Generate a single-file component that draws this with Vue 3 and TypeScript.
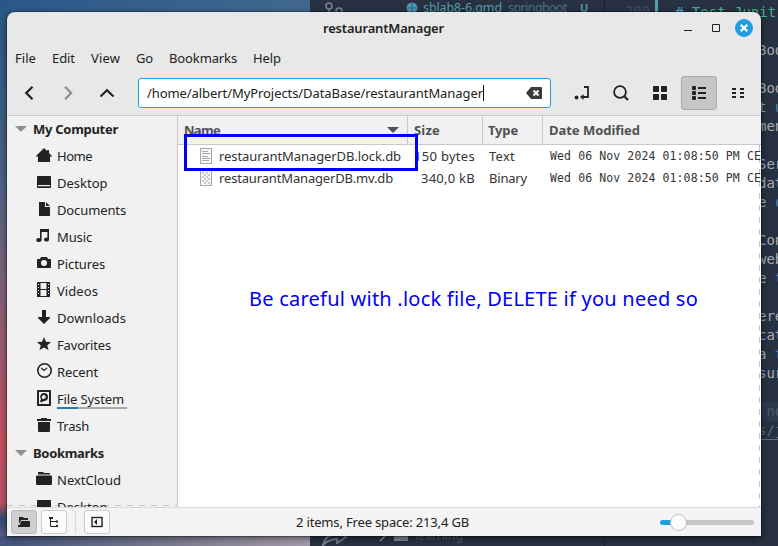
<script setup lang="ts">
import type { Directive } from 'vue'

interface Place { label: string; width: number; icon: string; used?: boolean }

// Adjusts tracking so a label occupies its intended width.
const vFit: Directive<HTMLElement, number> = {
  mounted(el, { value }) {
    const count = (el.textContent ?? '').length
    const natural = el.getBoundingClientRect().width
    if (count > 1) el.style.letterSpacing = `${(value - natural) / count}px`
  },
}

const menus = [
  { label: 'File', width: 21 }, { label: 'Edit', width: 23 }, { label: 'View', width: 29 },
  { label: 'Go', width: 17 }, { label: 'Bookmarks', width: 68 }, { label: 'Help', width: 28 },
]

const folder = 'M2 1h5l1 1h6v1.500H2zM1 4.500h14q1 0 1 1V13q0 1-1 1H1q-1 0-1-1V5.500q0-1 1-1z'
const desktop = 'M2 2h12q1 0 1 1v10q0 1-1 1H2q-1 0-1-1V3q0-1 1-1zM2 11v1.2h12V11z'
const computer: Place[] = [
  { label: 'Home', width: 35, icon: 'M8 1l3 3V3h2v3l3 3v.6h-2V15H2V9.600H0V9z' },
  { label: 'Desktop', width: 50.5, icon: desktop },
  { label: 'Documents', width: 69, icon: 'M3 1h6v5h5v9H3zM10 1l4 4h-4z' },
  { label: 'Music', width: 35, icon: 'M4 1h9v10.500a2.500 2 0 1 1-1.600-1.800V4H5.600v8a2.700 2 0 1 1-1.600-1.800z' },
  { label: 'Pictures', width: 48, icon: 'M5 2h6l1 2h2q1 0 1 1v7q0 1-1 1H2q-1 0-1-1V5q0-1 1-1h2zM8 5a3 3 0 1 0 0 6 3 3 0 0 0 0-6z' },
  { label: 'Videos', width: 41, icon: 'M1 0h13v15H1zM4.500 1v6h6V1zM4.500 8v6h6V8zM2 2v1h1V2zM2 5v1h1V5zM2 8v1h1V8zM2 11v1h1v-1zM12 2v1h1V2zM12 5v1h1V5zM12 8v1h1V8zM12 11v1h1v-1z' },
  { label: 'Downloads', width: 69, icon: 'M6 1h4v7h4v1l-6 6-6-6V8h4z' },
  { label: 'Favorites', width: 54, icon: 'M8 1l2 4.700 5 .3-3.800 3.400L12.500 14 8 11.500 3.500 14l1.300-4.600L1 6l5-.3z' },
  { label: 'Recent', width: 41, icon: 'M8.500 0a7.500 7.500 0 1 0 0 15 7.500 7.500 0 0 0 0-15zM8.500 1.600a5.900 5.900 0 1 1 0 11.800 5.900 5.900 0 0 1 0-11.800zM5.600 4.500l2.400 2 3-2 .6.8L8 8.200 4.900 5.500z' },
  { label: 'File System', width: 67, used: true, icon: 'M2 0h12q1 0 1 1v14q0 1-1 1H2q-1 0-1-1V1q0-1 1-1zM3 2v12h10V2zM8 3a4 4 0 1 1 0 8L5 12.500 4 11l1-1.500A4 4 0 0 1 8 3zM8 5a2.200 2.200 0 0 0-1 4.200l2-1v.6A2.200 2.200 0 0 0 8 5z' },
  { label: 'Trash', width: 32, icon: 'M5 1h6v1h4v2H1V2h4zM2 5h12v9q0 1-1 1H3q-1 0-1-1z' },
]
const bookmarks: Place[] = [
  { label: 'NextCloud', width: 64, icon: folder },
  { label: 'Desktop', width: 50.5, icon: desktop },
]
const sections = [
  { title: 'My Computer', width: 85, places: computer },
  { title: 'Bookmarks', width: 71, places: bookmarks },
]

const files = [
  { name: 'restaurantManagerDB.lock.db', nw: 182, size: '150 bytes', sw: 61, type: 'Text', tw: 26, text: true },
  { name: 'restaurantManagerDB.mv.db', nw: 174, size: '340,0 kB', sw: 54, type: 'Binary', tw: 38, text: false },
]
const modified = 'Wed 06 Nov 2024 01:08:50 PM CET'

const code = [
  { t: '# Test Junit', c: 'green' }, { t: '' }, { t: 'Boot' }, { t: '' }, { t: 'Boot' },
  { t: 't u', c: 'mix' }, { t: 'ment' }, { t: '' }, { t: 'Ser' }, { t: 'data' }, { t: 'e c', c: 'mix' },
  { t: '' }, { t: 'Cont' }, { t: 'web' }, { t: 'e t', c: 'mix' }, { t: '' }, { t: 'erea' },
  { t: 'cati' }, { t: 'a t', c: 'mix' }, { t: 'sur' }, { t: '' }, { t: ' no', c: 'dim' }, { t: 's/j', c: 'link' },
]
</script>

<template>
  <main class="desktop">
    <div class="wallpaper"></div>
    <div class="editor">
      <div class="explorer">
        <div class="tab">
          <svg class="branch" width="22" height="20" viewBox="0 0 22 20"><g fill="none" stroke="#7b8390" stroke-width="1.600"><circle cx="6" cy="7" r="3" /><circle cx="16" cy="12" r="3" /><path d="M6 10v9" /></g></svg>
          <svg class="globe" width="12" height="12" viewBox="0 0 12 12"><circle cx="6" cy="6" r="5.500" fill="#519aba" /><path d="M6 0v12M0 6h12" stroke="#29617b" /></svg>
          <span v-fit="79" class="filename">sblab8-6.qmd</span><span v-fit="59" class="package">springboot</span><b>U</b>
        </div>
        <div class="tree">
          <svg width="26" height="20" viewBox="0 0 26 20"><path d="M1 19C3 11 9 8 15 8V4l9 7-9 6v-4c-6 0-10 2-14 6z" fill="none" stroke="#737c89" stroke-width="1.800" /></svg>
          <svg class="chevron" width="8" height="10" viewBox="0 0 8 10"><path d="M1 0l5 5-5 5" fill="none" stroke="#9ba3ad" stroke-width="1.300" /></svg>
          <i></i><span v-fit="48">learning</span>
        </div>
      </div>
      <div class="gutter">200</div>
      <div class="code">
        <p v-for="(line, i) in code" :key="i" :class="line.c"><span v-if="i === 0"><em>#</em> Test Junit</span><span v-else class="tail"><template v-if="line.c === 'mix'">{{ line.t.slice(0, 2) }}<em>{{ line.t.slice(2) }}</em></template><template v-else>{{ line.t }}</template></span></p>
      </div>
    </div>

    <section class="window">
      <header class="titlebar">
        <h1 v-fit="121">restaurantManager</h1>
        <div class="controls">
          <svg width="10" height="20" viewBox="0 0 10 20"><path d="M1 12.500h8" stroke="#222" /></svg>
          <svg width="10" height="20" viewBox="0 0 10 20"><path d="M1.500 6.500h7v7h-7z" fill="none" stroke="#222" /></svg>
          <svg width="18" height="18" viewBox="0 0 18 18"><circle cx="9" cy="9" r="9" fill="#1f9ede" /><path d="M5.700 5.700l6.600 6.600m0-6.600l-6.600 6.600" stroke="#fff" stroke-width="2.200" /></svg>
        </div>
      </header>
      <nav class="menubar"><span v-for="m in menus" :key="m.label" v-fit="m.width">{{ m.label }}</span></nav>
      <div class="toolbar">
        <div class="history">
          <svg width="16" height="16" viewBox="0 0 16 16"><path d="M11.500 1.800L5.300 8l6.200 6.200" /></svg>
          <svg class="off" width="16" height="16" viewBox="0 0 16 16"><path d="M5 1.800L11.200 8 5 14.200" /></svg>
          <svg width="16" height="16" viewBox="0 0 16 16"><path d="M1.500 11.500L8 5.200l6.500 6.300" /></svg>
        </div>
        <div class="entry">
          <span v-fit="336">/home/albert/MyProjects/DataBase/restaurantManager</span><i class="caret"></i>
          <svg width="16" height="12" viewBox="0 0 16 12"><path d="M0 6l5-6h10q1 0 1 1v10q0 1-1 1H5z" fill="#3a3a3a" /><path d="M7.500 3.500l5 5m0-5l-5 5" stroke="#fff" stroke-width="2" /></svg>
        </div>
        <svg class="jump" width="16" height="16" viewBox="0 0 16 16"><path d="M10 2h4v10H8" fill="none" stroke="#222" stroke-width="1.800" /><path d="M9.500 9v6L6 12z" fill="#222" /><circle cx="2.500" cy="12.500" r="1.900" fill="#222" /></svg>
        <svg class="search" width="16" height="16" viewBox="0 0 16 16" fill="none" stroke="#222"><circle cx="7" cy="7" r="5.900" stroke-width="1.800" /><path d="M11 11l4 4" stroke-width="2.200" /></svg>
        <div class="views">
          <span><svg width="16" height="16" viewBox="0 0 16 16" fill="#222"><rect x="1" y="1" width="6" height="6" rx=".7" /><rect x="9" y="1" width="6" height="6" rx=".7" /><rect x="1" y="9" width="6" height="6" rx=".7" /><rect x="9" y="9" width="6" height="6" rx=".7" /></svg></span>
          <span class="active"><svg width="16" height="16" viewBox="0 0 16 16" fill="#222"><path d="M7 2h8v2H7zM7 7h8v2H7zM7 12h8v2H7z" /><rect x="1" y="1" width="4" height="4" rx="1" /><rect x="1" y="6" width="4" height="4" rx="1" /><rect x="1" y="11" width="4" height="4" rx="1" /></svg></span>
          <span><svg width="16" height="16" viewBox="0 0 16 16" fill="#222"><path d="M2 3h4v2H2zM2 7h4v2H2zM2 11h4v2H2zM10 3h4v2h-4zM10 7h4v2h-4zM10 11h4v2h-4z" /></svg></span>
        </div>
      </div>
      <div class="content">
        <aside class="sidebar">
          <template v-for="s in sections" :key="s.title">
            <h2><i></i><span v-fit="s.width">{{ s.title }}</span></h2>
            <div v-for="p in s.places" :key="p.label" class="place" :class="{ used: p.used }">
              <svg width="16" height="16" viewBox="0 0 16 16"><path fill-rule="evenodd" :d="p.icon" /></svg>
              <span v-fit="p.width">{{ p.label }}</span>
            </div>
          </template>
        </aside>
        <div class="files">
          <div class="row head">
            <div><span v-fit="36">Name</span><i></i></div><div><span v-fit="26">Size</span></div><div><span v-fit="30">Type</span></div><div><span v-fit="91">Date Modified</span></div>
          </div>
          <div v-for="f in files" :key="f.name" class="row">
            <div>
              <svg width="12" height="16" viewBox="0 0 12 16"><rect x=".5" y=".5" width="11" height="15" fill="#f7f7f7" stroke="#aaa" />
                <path v-if="f.text" d="M2 3.500h6M2 5.500h8M2 8.500h6M2 10.500h8M2 12.500h7" stroke="#aaa" />
                <path v-else d="M2 2h2v2H2zm4 0h2v2H6zM4 4h2v2H4zm4 0h2v2H8zM2 6h2v2H2zm4 0h2v2H6zM4 8h2v2H4zm4 0h2v2H8zM2 10h2v2H2zm4 0h2v2H6zM4 12h2v2H4zm4 0h2v2H8z" fill="#ccc" />
              </svg>
              <span v-fit="f.nw">{{ f.name }}</span>
            </div>
            <div class="size"><span v-fit="f.sw">{{ f.size }}</span></div>
            <div><span v-fit="f.tw">{{ f.type }}</span></div>
            <div class="date"><span v-fit="218">{{ modified }}</span></div>
          </div>
        </div>
      </div>
      <footer class="status">
        <div class="toggles">
          <span class="active"><svg width="12" height="12" viewBox="0 0 12 12"><path d="M1 1h4l1 1h4v2H3L1 8zM3 5h9v5q0 1-1 1H0V9h2z" fill="#222" /></svg></span>
          <span><svg width="12" height="12" viewBox="0 0 12 12"><path d="M2.500 1v9.500h6M2.500 5.500h6" fill="none" stroke="#222" /><path d="M1 1h4v2H1zM8 4.500h2v2H8zM8 9h2v2H8z" fill="#222" /></svg></span>
          <i></i>
          <span><svg width="12" height="12" viewBox="0 0 12 12"><rect x="1" y="1.500" width="10" height="9" fill="none" stroke="#222" stroke-width="1.400" /><path d="M6 3v6L3 6z" fill="#222" /></svg></span>
        </div>
        <span v-fit="173" class="summary">2 items, Free space: 213,4 GB</span>
        <div class="slider"><i></i></div>
      </footer>
    </section>
    <div class="highlight"></div>
    <p class="note"><span v-fit="449">Be careful with .lock file, DELETE if you need so</span></p>
  </main>
</template>

<style>
body { overflow: hidden; }
</style>

<style scoped>
* { box-sizing: border-box; }
h1, h2, p { margin: 0; }
svg { display: block; flex: none; }
span, h1 { white-space: pre; }
.desktop { position: relative; display: flex; width: 778px; height: 546px; overflow: hidden; background: #273142; font: 13px/20px "Noto Sans", sans-serif; color: #222; }
.wallpaper { width: 310px; background: linear-gradient(90deg, transparent 0 8px, #2c5889 9px, #42688f 100%) top / 100% 13px no-repeat, linear-gradient(90deg, #41547b, #858194 65%, #a39bab) bottom / 100% 10px no-repeat, linear-gradient(#285783 0, #4d6285 33%, #79637b 50%, #a5596d 68%, #c05161 80%, #b85462 92%, #344c72 95%, #6a7089); }
.editor { display: flex; flex: 1; overflow: hidden; }
.explorer { display: flex; flex-direction: column; justify-content: space-between; width: 295px; border-right: 1px solid #18222f; font-size: 12.500px; }
.tab { display: flex; align-items: center; height: 15px; color: #5796a4; }
.branch { margin-left: 13px; margin-top: 3px; }
.globe { margin-left: 61px; margin-right: 5px; }
.filename { color: #559eaa; }
.package { color: #4a7284; margin-left: 6px; }
.tab b { margin-left: 13px; font-size: 11px; }
.tree { display: flex; align-items: center; height: 20px; padding-left: 12px; color: #4f5b6a; }
.chevron { margin-left: 31px; }
.tree i { width: 14px; height: 10px; margin: 0 7px 0 7px; background: #778992; }
.gutter { width: 53px; height: 24px; border-right: 3px solid #52a5b0; padding: 2px 5px 0 0; font: 14px/19px "DejaVu Sans Mono", monospace; color: #414c5d; text-align: right; }
.code { flex: 1; padding-top: 3px; overflow: hidden; font: 14px/19px "DejaVu Sans Mono", monospace; color: #a4abb4; }
.code p { height: 19px; padding-left: 17px; white-space: pre; }
.code em { font-style: normal; color: #4b86bb; }
.code .tail { margin-left: 83px; }
.code .green { color: #43b493; }
.code .green em { color: #57a7c8; }
.code .dim { color: #4c5968; background: #2c394b; }
.code .link { color: #5b6977; border-bottom: 1px solid #617080; }
.window { position: absolute; left: 7px; top: 12px; display: flex; flex-direction: column; width: 754px; height: 524px; overflow: hidden; border-radius: 8px 8px 0 0; background: #e8e8e8; box-shadow: 0 0 0 1px #0004, 0 2px 7px #0008; }
.titlebar { display: flex; align-items: center; height: 32px; padding-left: 316px; }
h1 { font-size: 13px; line-height: 20px; font-weight: 600; }
.controls { display: flex; align-items: center; gap: 18px; margin-left: auto; padding-right: 8px; }
.controls svg:nth-child(2) { margin-right: -4px; }
.menubar { display: flex; gap: 16px; height: 29px; padding: 4px 8px; }
.toolbar { display: flex; align-items: center; height: 43px; padding-bottom: 3px; border-bottom: 1px solid #c9c9c9; }
.history { display: flex; gap: 23px; padding-left: 14px; width: 131px; }
.history svg { fill: none; stroke: #222; stroke-width: 2.200; }
.history .off { stroke: #909090; }
.entry { display: flex; align-items: center; width: 413px; height: 30px; padding: 0 8px; border: 1px solid #1f9ede; border-radius: 3px; background: #fff; }
.caret { width: 1px; height: 16px; background: #111; }
.entry svg { margin-left: auto; }
.jump { margin-left: 23px; }
.search { margin-left: 23px; margin-right: 13px; }
.views { display: flex; gap: 3px; }
.views span { display: grid; place-items: center; width: 36px; height: 34px; }
.views .active { border: 1px solid #aaa; border-radius: 3px; background: #c6c6c6; }
.content { display: flex; height: 391px; overflow: hidden; }
.sidebar { width: 171px; overflow: hidden; background: linear-gradient(90deg, #c4c4c4 50%, transparent 50%) 0 389px / 12px 1px repeat-x, #f1f1f1; border-right: 1px solid #c9c9c9; }
h2 { display: flex; align-items: center; height: 27px; padding-left: 8px; font-size: 13px; font-weight: 700; }
h2:first-child { height: 26px; }
h2 i { margin-right: 6px; border: 6px solid transparent; border-bottom: 0; border-top-color: #909090; }
.place { display: flex; align-items: flex-start; height: 27px; padding: 4px 0 0 29px; }
.place svg { margin: 1px 5px 0 0; fill: #222; }
.used { background: linear-gradient(90deg, #1f7db5 30%, #aaa 30%) 50px 22px / 70px 2px no-repeat; }
.files { flex: 1; background: repeating-linear-gradient(#c4c4c4 0 6px, #fff 6px 12px) 581px 29px / 1px 100% no-repeat, #fff; overflow: hidden; }
.row { display: grid; grid-template-columns: 230px 75px 60px 218px; height: 22px; color: #333; }
.row > div { display: flex; align-items: center; padding-left: 6px; overflow: hidden; }
.row:not(.head) > div:first-child { padding-left: 22px; }
.row svg { margin-right: 7px; }
.row .size { justify-content: flex-end; padding: 0 8px 0 0; }
.row .date { font: 11.500px/20px "DejaVu Sans Mono", monospace; padding-left: 7px; }
.head { height: 29px; background: #f1f1f1; border-bottom: 1px solid #c9c9c9; color: #505050; font-weight: 700; }
.head > div { border-right: 1px solid #c9c9c9; }
.head > div:last-child { border: 0; }
.head > div:nth-child(3) { padding-left: 5px; }
.head i { margin-left: auto; margin-right: 8px; border: 6px solid transparent; border-bottom: 0; border-top-color: #505050; }
.status { display: flex; align-items: center; height: 29px; background: #f4f4f4; border-top: 1px solid #dadada; }
.toggles { display: flex; align-items: center; padding-left: 4px; width: 289px; }
.toggles span { display: grid; place-items: center; width: 26px; height: 24px; margin-right: 4px; border: 1px solid #ccc; border-radius: 3px; background: #fbfbfb; }
.toggles .active { background: #cfcfcf; border-color: #b8b8b8; }
.toggles i { width: 1px; height: 24px; margin: 0 8px 0 4px; background: #dadada; }
.slider { display: flex; align-items: center; width: 94px; height: 5px; margin-left: auto; margin-right: 7px; border-radius: 3px; background: linear-gradient(90deg, #1f9ede 18px, #c6c6c6 18px); }
.slider i { width: 17px; height: 17px; margin-left: 10px; border: 1px solid #bdbdbd; border-radius: 50%; background: #fcfcfc; flex: none; }
.highlight { position: absolute; left: 184px; top: 134px; width: 234px; height: 37px; border: 3px solid #0000f4; }
.note { position: absolute; left: 249px; top: 285px; font: 20px/28px "Noto Sans", sans-serif; color: #0000f4; }
</style>
